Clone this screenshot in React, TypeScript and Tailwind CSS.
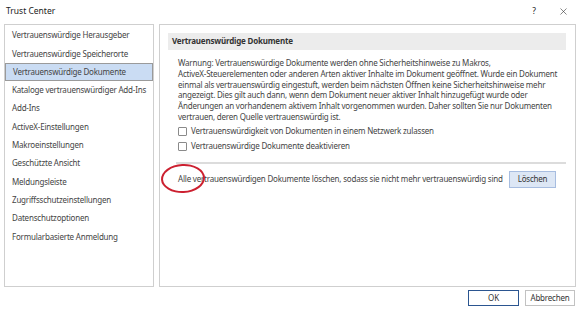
import { X } from "lucide-react";

const navItems = [
  "Vertrauenswürdige Herausgeber",
  "Vertrauenswürdige Speicherorte",
  "Vertrauenswürdige Dokumente",
  "Kataloge vertrauenswürdiger Add-Ins",
  "Add-Ins",
  "ActiveX-Einstellungen",
  "Makroeinstellungen",
  "Geschützte Ansicht",
  "Meldungsleiste",
  "Zugriffsschutzeinstellungen",
  "Datenschutzoptionen",
  "Formularbasierte Anmeldung",
];

const warning = [
  "Warnung: Vertrauenswürdige Dokumente werden ohne Sicherheitshinweise zu Makros,",
  "ActiveX-Steuerelementen oder anderen Arten aktiver Inhalte im Dokument geöffnet. Wurde ein Dokument",
  "einmal als vertrauenswürdig eingestuft, werden beim nächsten Öffnen keine Sicherheitshinweise mehr",
  "angezeigt. Dies gilt auch dann, wenn dem Dokument neuer aktiver Inhalt hinzugefügt wurde oder",
  "Änderungen an vorhandenem aktivem Inhalt vorgenommen wurden. Daher sollten Sie nur Dokumenten",
  "vertrauen, deren Quelle vertrauenswürdig ist.",
];

function Checkbox({ label }: { label: string }) {
  return (
    <div className="flex items-center h-[15px] gap-[4px]">
      <div className="w-[9px] h-[9px] border border-[#8a8a8a] rounded-[1px] bg-white" />
      <span>{label}</span>
    </div>
  );
}

export default function App() {
  return (
    <div
      className="relative w-[580px] h-[314px] bg-white overflow-hidden text-[#444] text-[8px] leading-[10.8px] tracking-[-0.2px]"
      style={{ fontFamily: '"Noto Sans", "Open Sans", sans-serif' }}
    >
      {/* title bar */}
      <div className="flex items-center h-[22px] pl-[6px] pr-[11px] text-[#222] text-[8.5px] tracking-normal">
        <span className="flex-1 pt-[1px]">Trust Center</span>
        <span className="w-[10px] text-center mr-[19px]">?</span>
        <X size={11} strokeWidth={1.3} className="text-[#333]" />
      </div>

      <div className="flex gap-[5px] pl-[4px] pr-[4px] pt-[2px]">
        {/* left nav */}
        <div className="w-[150px] shrink-0 h-[263px] border border-[#cfcfcf] pt-[1.5px]">
          {navItems.map((item, i) => (
            <div
              key={item}
              className={`h-[18.3px] flex items-center pl-[7px] whitespace-nowrap ${
                i === 2 ? "bg-[#cadcf3] border border-[#9a9a9a] pl-[6px]" : ""
              }`}
            >
              {item}
            </div>
          ))}
        </div>

        {/* right panel */}
        <div className="flex-1 min-w-0 overflow-hidden h-[263px] border border-[#cfcfcf] pt-[8px] pl-[8px] pr-[9px]">
          <div className="h-[17px] bg-[#ececec] flex items-center pl-[4px] font-bold text-[#333]">
            Vertrauenswürdige Dokumente
          </div>
          <div className="pl-[10px] pt-[8px]">
            {warning.map((line) => (
              <div key={line} className="whitespace-nowrap">
                {line}
              </div>
            ))}
            <div className="mt-[1px]">
              <Checkbox label="Vertrauenswürdigkeit von Dokumenten in einem Netzwerk zulassen" />
              <Checkbox label="Vertrauenswürdige Dokumente deaktivieren" />
            </div>
          </div>
          <div className="ml-[8px] mt-[8px] h-[2px] bg-[#dcdcdc]" />
          <div className="flex items-center pl-[10px] pr-[10px] pt-[7px]">
            <span className="flex-1 whitespace-nowrap">
              Alle vertrauenswürdigen Dokumente löschen, sodass sie nicht mehr vertrauenswürdig sind
            </span>
            <button className="w-[47px] h-[17px] bg-[#dde7f5] border border-[#a7bde0] text-[#333]">
              Löschen
            </button>
          </div>
        </div>
      </div>

      {/* footer */}
      <div className="flex justify-end gap-[6px] pr-[5px] pt-[3px]">
        <button className="w-[51px] h-[16px] border border-[#2b5590] text-[#333] bg-white">OK</button>
        <button className="w-[50px] h-[16px] border border-[#c2c2c2] text-[#333] bg-white">Abbrechen</button>
      </div>

      {/* red annotation */}
      <div className="absolute left-[161px] top-[164px] w-[44px] h-[29px] rounded-[50%] border-2 border-[#cc2030] -rotate-3" />
    </div>
  );
}
